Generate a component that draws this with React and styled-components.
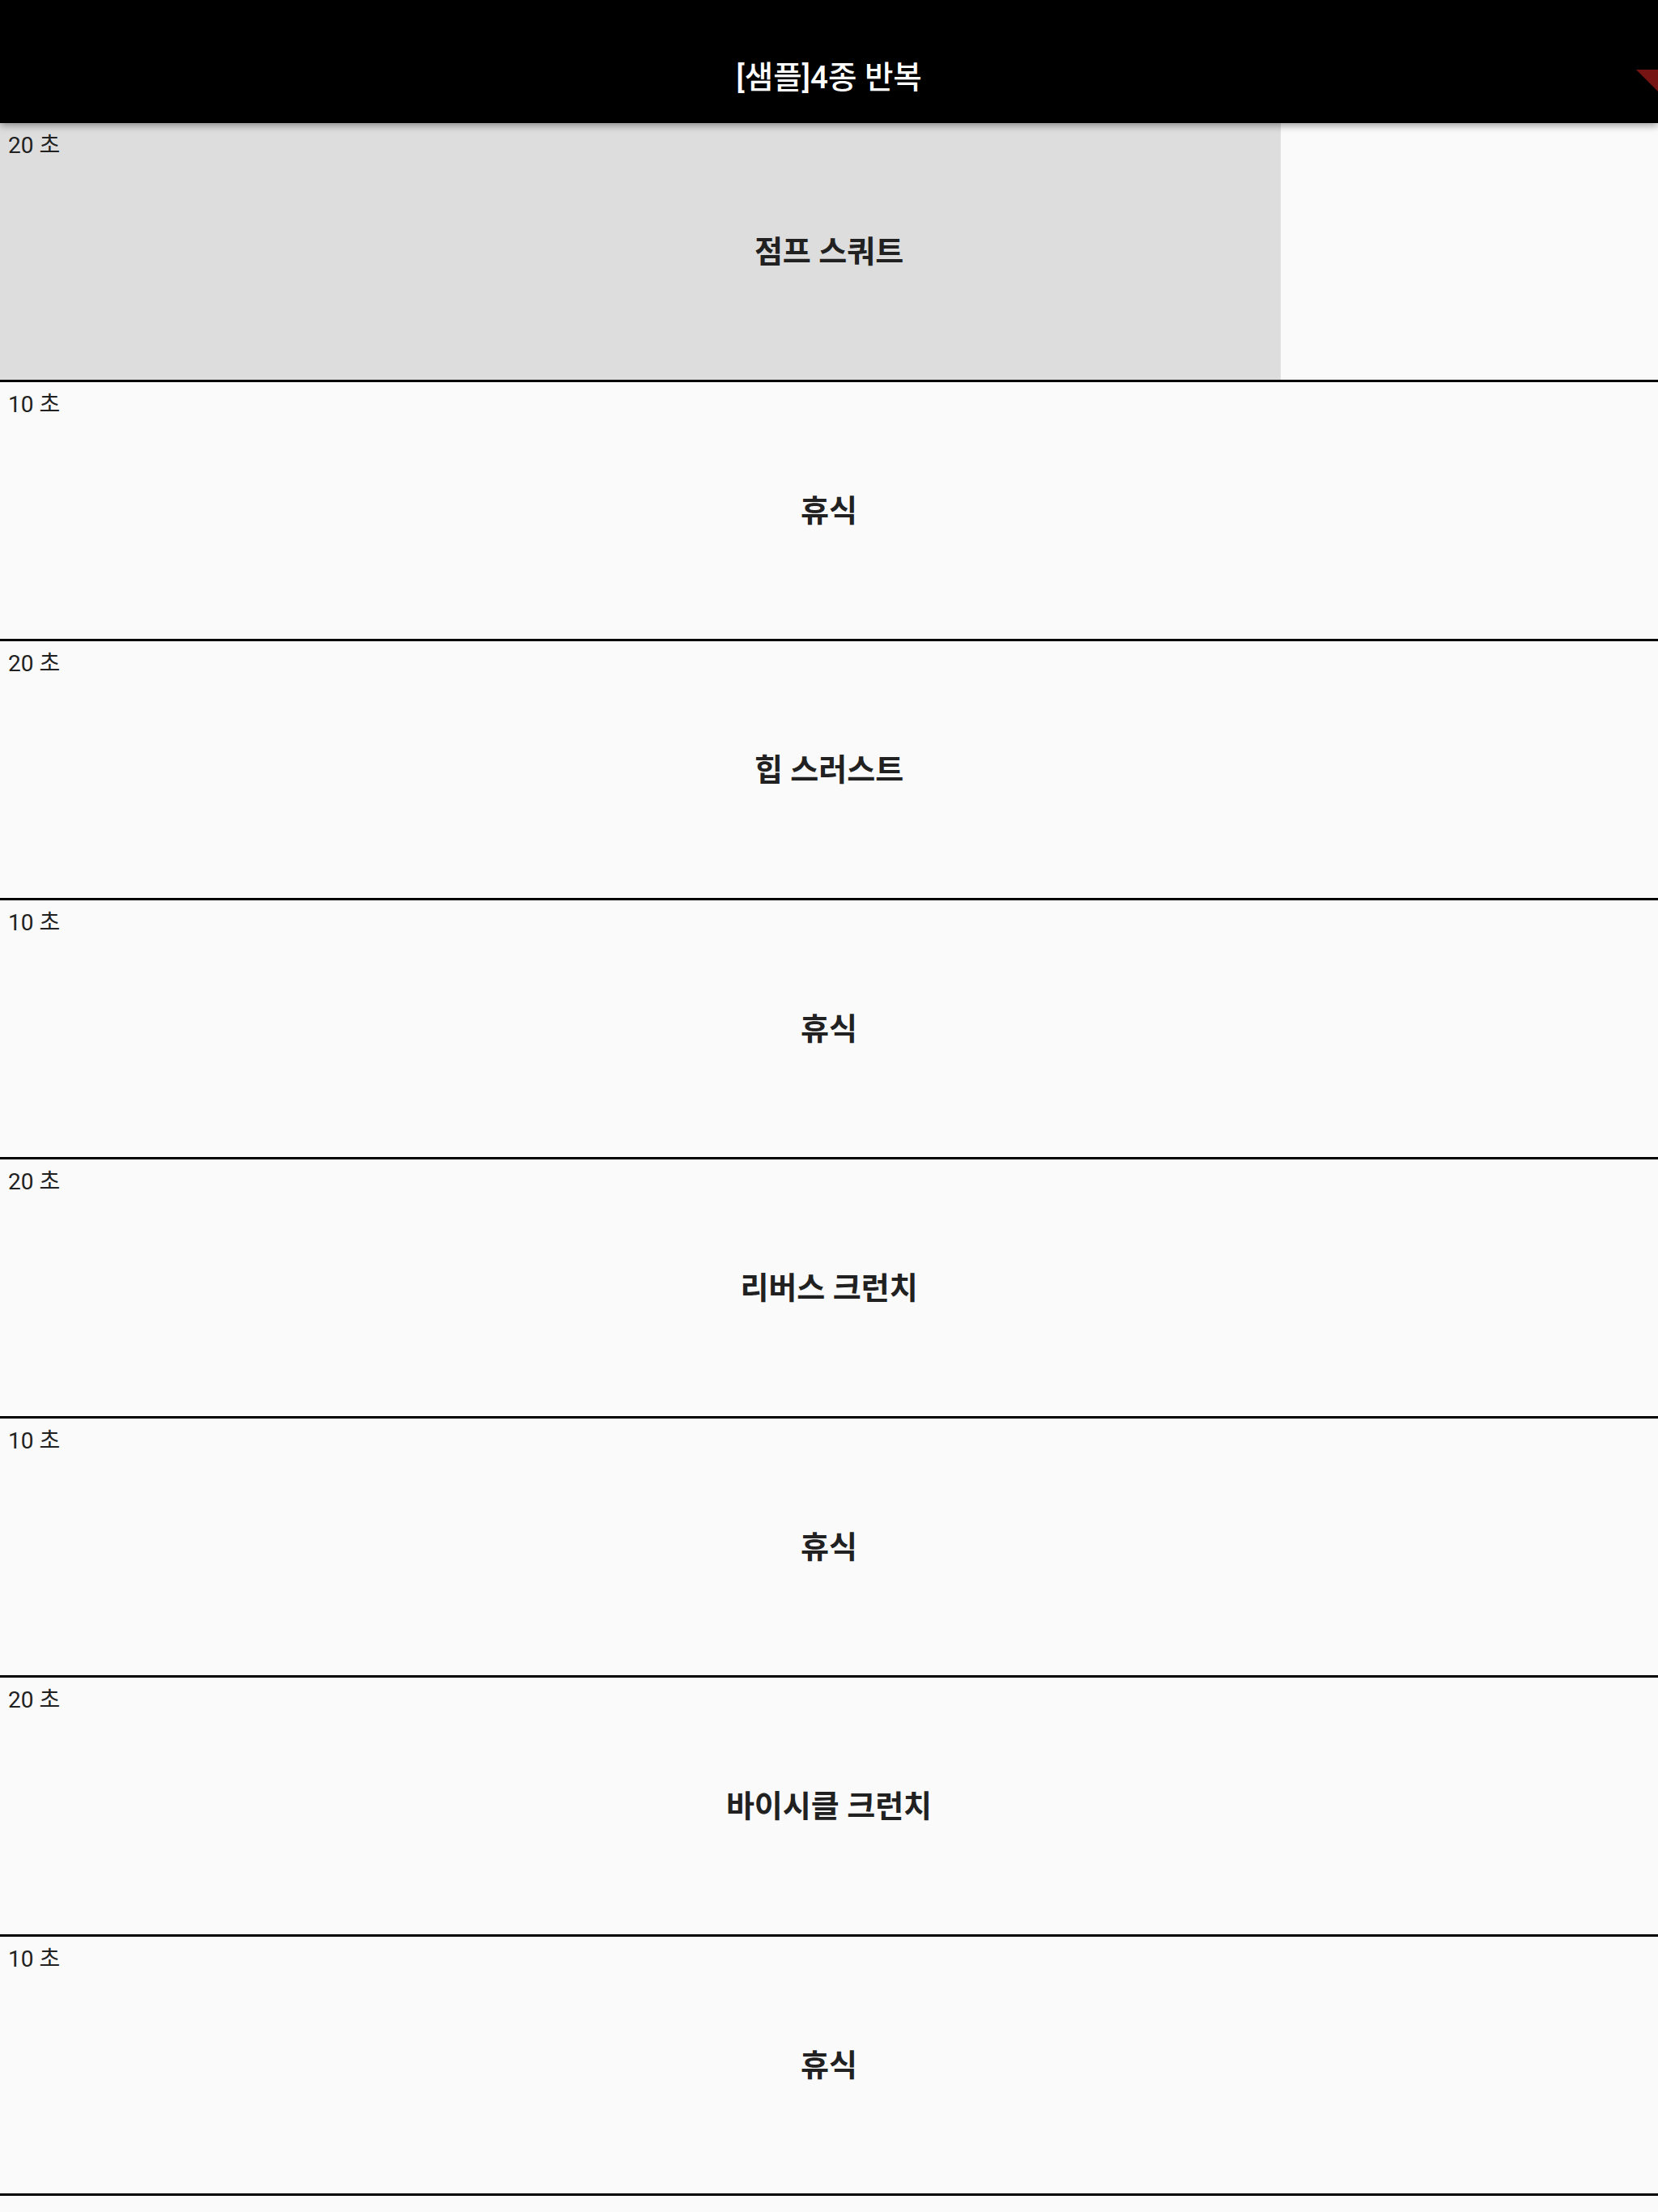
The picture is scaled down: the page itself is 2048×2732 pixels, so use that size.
import React from "react";
import styled, { createGlobalStyle } from "styled-components";

const Global = createGlobalStyle`
  html, body { margin: 0; padding: 0; background: #fafafa; }
  body { font-family: Roboto, "Noto Sans CJK KR", "Noto Sans", sans-serif; }
  * { box-sizing: border-box; }
`;

const Page = styled.div`
  width: 2048px;
  min-height: 2732px;
  background: #fafafa;
  display: flex;
  flex-direction: column;
  overflow: hidden;
`;

const Header = styled.header`
  position: relative;
  z-index: 2;
  height: 152px;
  padding-top: 40px;
  background: #000;
  display: flex;
  align-items: center;
  justify-content: center;
  box-shadow: 0 3px 9px rgba(0, 0, 0, 0.38);
`;

const Title = styled.h1`
  margin: 0;
  color: #fff;
  font-family: Roboto, "Noto Sans CJK KR", sans-serif;
  font-size: 38.5px;
  font-weight: 500;
  line-height: 1;
`;

const Banner = styled.svg`
  position: absolute;
  top: 0;
  right: 0;
  width: 60px;
  height: 152px;
`;

const List = styled.main`
  display: flex;
  flex-direction: column;
`;

const Row = styled.section`
  height: 320px;
  border-bottom: 3px solid #000;
  display: grid;
  grid-template: 1fr / 1fr;
  background: ${(p) =>
    p.$progress != null
      ? `linear-gradient(to right, #dddddd ${p.$progress}%, #fafafa ${p.$progress}%)`
      : "#fafafa"};
`;

const Duration = styled.span`
  grid-area: 1 / 1;
  align-self: start;
  justify-self: start;
  padding: 5px 0 0 10px;
  font-size: 28px;
  line-height: normal;
  color: #212121;
`;

const Name = styled.span`
  grid-area: 1 / 1;
  align-self: center;
  justify-self: center;
  font-size: 38px;
  font-weight: 700;
  line-height: 1;
  color: #212121;
`;

const items = [
  { sec: 20, name: "점프 스쿼트", progress: 77.25 },
  { sec: 10, name: "휴식" },
  { sec: 20, name: "힙 스러스트" },
  { sec: 10, name: "휴식" },
  { sec: 20, name: "리버스 크런치" },
  { sec: 10, name: "휴식" },
  { sec: 20, name: "바이시클 크런치" },
  { sec: 10, name: "휴식" },
];

export default function App() {
  return (
    <Page>
      <Global />
      <Header>
        <Title>[샘플]4종 반복</Title>
        <Banner viewBox="0 0 60 152">
          <polygon points="33,86 60,86 60,113" fill="#761313" />
        </Banner>
      </Header>
      <List>
        {items.map((it, i) => (
          <Row key={i} $progress={it.progress}>
            <Duration>{it.sec} 초</Duration>
            <Name>{it.name}</Name>
          </Row>
        ))}
      </List>
    </Page>
  );
}
